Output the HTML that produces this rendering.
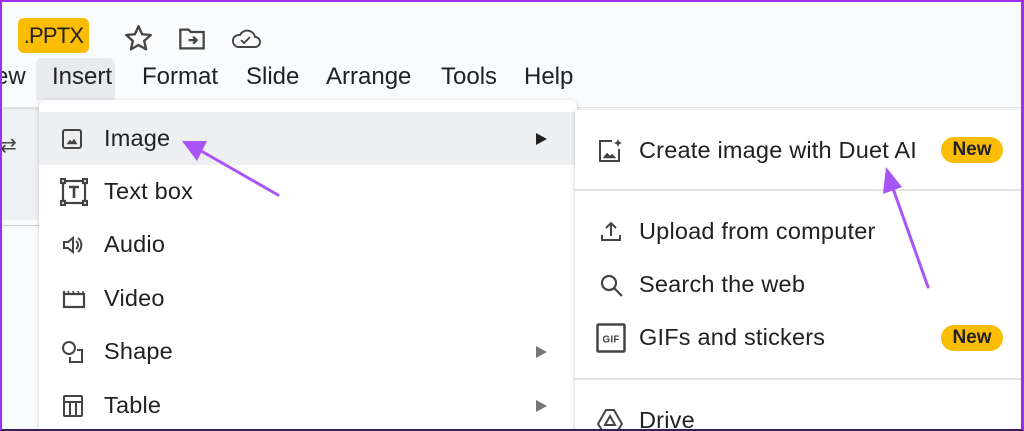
<!DOCTYPE html>
<html><head><meta charset="utf-8"><style>
*{box-sizing:border-box;margin:0;padding:0}
html,body{width:1024px;height:431px;overflow:hidden}
body{background:#f9fbfd;font-family:"Liberation Sans",Arial,sans-serif;color:#202124;position:relative}
.frame{position:absolute;left:0;top:0;width:1024px;height:431px;border:2px solid #9b30f0;border-bottom-color:#3a1a5a;border-right-width:3px;pointer-events:none;z-index:10}
.abs{position:absolute}
.badge{left:18px;top:18px;width:71px;height:35px;background:#fbbc04;border-radius:6px;font-size:22px;line-height:35px;text-align:center;color:#202124;letter-spacing:-0.8px}
.mb{top:61px;font-size:24px;line-height:32px}
.toolbar{left:0;top:108px;width:40px;height:112px;background:#eef0f3;border-top:1px solid #dadce0}
.menu{left:39px;top:100px;width:538px;height:340px;background:#fff;border-radius:6px;box-shadow:0 1px 4px rgba(0,0,0,.2)}
.sub{left:575px;top:110px;width:446px;height:330px;background:#fff;box-shadow:-1px 0 3px rgba(0,0,0,.15)}
.it{position:absolute;left:0;width:100%;height:53px;font-size:23.5px;line-height:53px;letter-spacing:0.2px}
.it span{position:absolute}
.it svg{position:absolute}
.new{position:absolute;left:366px;width:62px;height:26px;background:#fbbc04;border-radius:13px;font-weight:bold;font-size:19px;line-height:26px;text-align:center;letter-spacing:0}
.hr{position:absolute;left:0;width:100%;height:2px;background:#e3e3e3}
.tri{position:absolute;width:0;height:0;border-top:6px solid transparent;border-bottom:6px solid transparent;border-left:11px solid #222}
</style></head><body>
<div class="abs badge">.PPTX</div>
<svg class="abs" style="left:123px;top:23px" width="31" height="31" viewBox="0 0 24 24" fill="none" stroke="#444" stroke-width="1.8" stroke-linejoin="round"><path d="M12 2.5l2.8 6.2 6.7.6-5.1 4.5 1.5 6.6L12 17l-5.9 3.4 1.5-6.6-5.1-4.5 6.7-.6z"/></svg>
<svg class="abs" style="left:178px;top:26px" width="28" height="26" viewBox="0 0 24 22" fill="none" stroke="#444" stroke-width="1.9"><path d="M2 3h7l2 2h11v14H2z"/><path d="M9 12h7M13 9l3 3-3 3"/></svg>
<svg class="abs" style="left:230px;top:26px" width="32" height="24" viewBox="0 0 32 24" fill="none" stroke="#444" stroke-width="1.9"><path d="M8 21h17a5 5 0 0 0 0-10 8 8 0 0 0-15-2 6 6 0 0 0-2 12z"/><path d="M11 14l3 3 6-6"/></svg>
<div class="abs" style="left:36px;top:58px;width:79px;height:42px;background:#e8eaed;border-radius:6px 6px 0 0"></div>
<div class="abs mb" style="left:-5px">ew</div>
<div class="abs mb" style="left:52px">Insert</div>
<div class="abs mb" style="left:142px">Format</div>
<div class="abs mb" style="left:246px">Slide</div>
<div class="abs mb" style="left:326px">Arrange</div>
<div class="abs mb" style="left:441px">Tools</div>
<div class="abs mb" style="left:524px">Help</div>
<div class="abs" style="left:0;top:107px;width:1024px;height:1px;background:#e3e5e8"></div>
<div class="abs toolbar"></div>
<div class="abs" style="left:0;top:133px;font-size:20px;color:#444">⇄</div>
<div class="abs" style="left:0;top:225px;width:40px;height:1px;background:#ccc"></div>

<div class="abs menu">
 <div class="it" style="top:12px;background:#eeeff1"><svg style="left:23px;top:17px" width="20" height="20" viewBox="0 0 20 20" fill="none" stroke="#444" stroke-width="2"><rect x="1" y="1" width="18" height="18" rx="2"/><path d="M5 15l3-4 2 2 2-3 3 5z" fill="#444" stroke-width="0.5"/></svg><span style="left:65px">Image</span><div class="tri" style="left:497px;top:21px"></div></div>
 <div class="it" style="top:65px"><svg style="left:21px;top:13px" width="28" height="28" viewBox="0 0 28 28" fill="none" stroke="#444" stroke-width="2.2"><rect x="3" y="3" width="22" height="22"/><rect x="1" y="1" width="4" height="4" fill="#fff"/><rect x="23" y="1" width="4" height="4" fill="#fff"/><rect x="1" y="23" width="4" height="4" fill="#fff"/><rect x="23" y="23" width="4" height="4" fill="#fff"/><path d="M9 9h10M14 9v11" stroke-width="2.6"/></svg><span style="left:65px">Text box</span></div>
 <div class="it" style="top:118px"><svg style="left:23px;top:17px" width="22" height="20" viewBox="0 0 22 20" fill="none" stroke="#444" stroke-width="2"><path d="M2 7h4l5-4v14l-5-4H2z"/><path d="M14 6a5 5 0 0 1 0 8M16 3a9 9 0 0 1 0 14"/></svg><span style="left:65px">Audio</span></div>
 <div class="it" style="top:172px"><svg style="left:23px;top:17px" width="24" height="20" viewBox="0 0 24 20" fill="none" stroke="#444" stroke-width="2.2"><path d="M2 2v16h20V5H2"/><path d="M6 2l1 3M11 2l1 3M16 2l1 3M21 2v3" stroke-width="1.6"/></svg><span style="left:65px">Video</span></div>
 <div class="it" style="top:225px"><svg style="left:22px;top:15px" width="24" height="24" viewBox="0 0 24 24" fill="none" stroke="#444" stroke-width="2"><circle cx="8" cy="8" r="6"/><path d="M16 10h5v12H9v-5"/></svg><span style="left:65px">Shape</span><div class="tri" style="left:497px;top:21px;border-left-color:#777"></div></div>
 <div class="it" style="top:279px"><svg style="left:24px;top:16px" width="20" height="22" viewBox="0 0 20 22" fill="none" stroke="#444" stroke-width="2"><rect x="1" y="1" width="18" height="20" rx="1"/><path d="M1 7h18M7 7v14M13 7v14"/></svg><span style="left:65px">Table</span><div class="tri" style="left:497px;top:21px;border-left-color:#777"></div></div>
</div>

<div class="abs sub">
 <div class="it" style="top:14px"><svg style="left:22px;top:14px" width="26" height="26" viewBox="0 0 26 26" fill="none" stroke="#444" stroke-width="2"><path d="M15 3H3v20h19V11"/><path d="M6 20l4-5 3 3 2-2 4 4z" fill="#444" stroke-width=".5"/><path d="M21 1l1.3 2.7L25 5l-2.7 1.3L21 9l-1.3-2.7L17 5l2.7-1.3z" fill="#444" stroke="none"/></svg><span style="left:64px">Create image with Duet AI</span><div class="new" style="top:13px">New</div></div>
 <div class="hr" style="top:79px"></div>
 <div class="it" style="top:95px"><svg style="left:25px;top:15px" width="22" height="22" viewBox="0 0 22 22" fill="none" stroke="#444" stroke-width="2"><path d="M11 16V3M6 8l5-5 5 5M2 15v5h18v-5"/></svg><span style="left:64px">Upload from computer</span></div>
 <div class="it" style="top:148px"><svg style="left:25px;top:16px" width="24" height="24" viewBox="0 0 24 24" fill="none" stroke="#444" stroke-width="2.2"><circle cx="9" cy="9" r="7"/><path d="M14 14l8 8"/></svg><span style="left:64px">Search the web</span></div>
 <div class="it" style="top:201px"><svg style="left:21px;top:12px" width="30" height="30" viewBox="0 0 30 30"><rect x="1.5" y="1.5" width="27" height="27" rx="1" fill="none" stroke="#444" stroke-width="2.5"/><text x="15" y="19.5" font-size="10" font-weight="bold" text-anchor="middle" fill="#444" font-family="Liberation Sans,sans-serif">GIF</text></svg><span style="left:64px">GIFs and stickers</span><div class="new" style="top:14px">New</div></div>
 <div class="hr" style="top:268px"></div>
 <div class="it" style="top:284px"><svg style="left:22px;top:14px" width="26" height="24" viewBox="0 0 26 24" fill="none" stroke="#444" stroke-width="2"><path d="M9 2h8l8 14-4 6H5l-4-6z"/><path d="M13 8l5 9H8z"/></svg><span style="left:64px">Drive</span></div>
</div>

<svg class="abs" style="left:0;top:0;z-index:5" width="1024" height="431">
 <line x1="278" y1="195" x2="196" y2="148" stroke="#a855f7" stroke-width="3" stroke-linecap="round"/>
 <path d="M182 141l25 0-10 20z" fill="#a855f7"/>
 <line x1="928" y1="287" x2="890" y2="180" stroke="#a855f7" stroke-width="3" stroke-linecap="round"/>
 <path d="M886 167l-3 27 19-7z" fill="#a855f7"/>
</svg>
<div class="frame"></div>
</body></html>
